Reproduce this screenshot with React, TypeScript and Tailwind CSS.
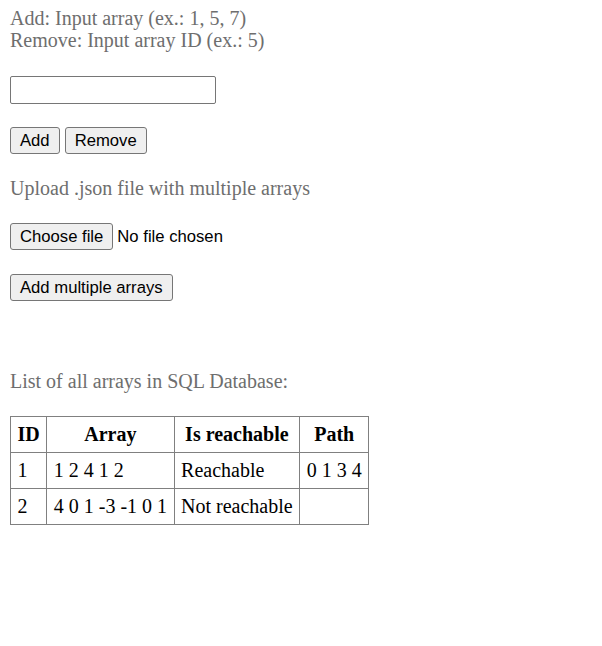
import { type FC } from 'react'

const serif = "font-['Liberation_Serif','Times_New_Roman',serif]"
const sans = "font-['Liberation_Sans',Arial,sans-serif]"

const rows = [
  { id: 1, array: '1 2 4 1 2', reachable: 'Reachable', path: '0 1 3 4' },
  { id: 2, array: '4 0 1 -3 -1 0 1', reachable: 'Not reachable', path: '' },
]

const Btn: FC<{ label: string }> = ({ label }) => (
  <button
    type="button"
    className={`${sans} h-[27px] px-[9px] text-[16.67px] leading-[19px] text-black bg-[#efefef] border border-[#767676] rounded-[3px]`}
  >
    {label}
  </button>
)

const cell = 'border border-[#808080] px-[6.5px] py-[6px] leading-[23px]'

export default function App() {
  return (
    <div className={`${serif} min-h-[646px] bg-white px-[10px] pt-[7px] text-[20px] leading-[22px] text-[#6e6e6e]`}>
      <p>
        Add: Input array (ex.: 1, 5, 7)
        <br />
        Remove: Input array ID (ex.: 5)
      </p>

      <input
        type="text"
        className={`${sans} mt-[25px] block h-[28px] w-[206px] rounded-[2px] border border-[#767676] bg-white px-[3px] text-[16.67px] text-black outline-none`}
      />

      <div className="mt-[23px] flex gap-[5px]">
        <Btn label="Add" />
        <Btn label="Remove" />
      </div>

      <p className="mt-[23px]">Upload .json file with multiple arrays</p>

      <div className="mt-[24px] flex items-center gap-[4px]">
        <Btn label="Choose file" />
        <span className={`${sans} text-[16.67px] text-black`}>No file chosen</span>
      </div>

      <div className="mt-[24px]">
        <Btn label="Add multiple arrays" />
      </div>

      <p className="mt-[69px]">List of all arrays in SQL Database:</p>

      <table className="mt-[24px] border-collapse border border-[#808080] text-black">
        <thead>
          <tr>
            {['ID', 'Array', 'Is reachable', 'Path'].map(h => (
              <th key={h} className={`${cell} text-center font-bold`}>
                {h}
              </th>
            ))}
          </tr>
        </thead>
        <tbody>
          {rows.map(r => (
            <tr key={r.id}>
              <td className={`${cell} text-left`}>{r.id}</td>
              <td className={`${cell} text-left`}>{r.array}</td>
              <td className={`${cell} text-left`}>{r.reachable}</td>
              <td className={`${cell} text-left`}>{r.path}</td>
            </tr>
          ))}
        </tbody>
      </table>
    </div>
  )
}
